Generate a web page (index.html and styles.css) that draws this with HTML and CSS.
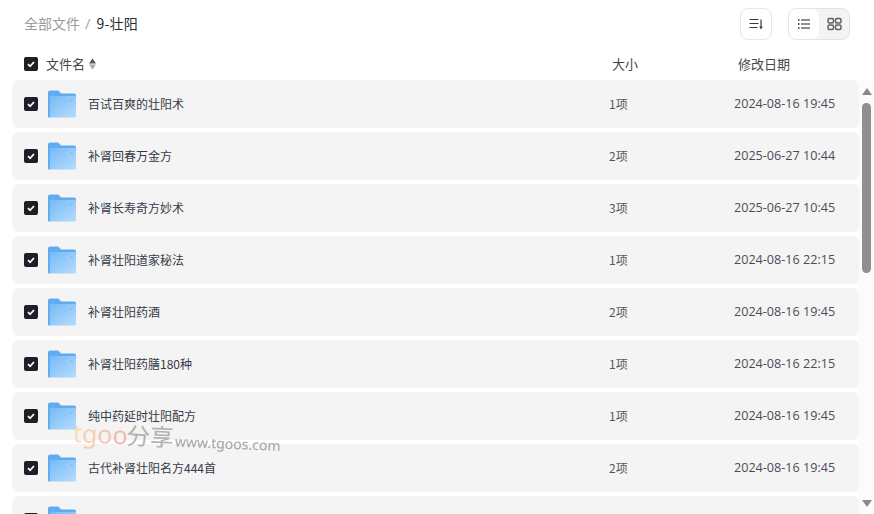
FILE: index.html
```html
<!DOCTYPE html>
<html lang="zh-CN">
<head>
    <meta charset="UTF-8">
    <title>9-壮阳</title>
    <link rel="stylesheet" href="styles.css">
</head>
<body>
    <svg class="defs" width="0" height="0">
        <defs>
            <linearGradient id="folderFront" x1="0" y1="0" x2="1" y2="1">
                <stop offset="0" stop-color="#74b9f6"/>
                <stop offset="1" stop-color="#b5dcfd"/>
            </linearGradient>
            <symbol id="folder" viewBox="0 0 30 28">
                <path d="M1 2.5C1 1.4 1.9.5 3 .5h7.6c.6 0 1.100.3 1.500.7L14 3.500h13c1.100 0 2 .9 2 2V8H1z" fill="#5fadf0"/>
                <path d="M1 6h26.500c.8 0 1.500.7 1.500 1.500V26c0 .8-.7 1.500-1.500 1.500H2.500C1.700 27.500 1 26.800 1 26z" fill="url(#folderFront)"/>
                <rect x="23" y="10" width="3" height="1.500" fill="#5fadf0" opacity=".45"/>
                <path d="M1 6v20c0 .8.700 1.500 1.500 1.500H3V6z" fill="#5fadf0"/>
            </symbol>
            <symbol id="check" viewBox="0 0 14 14">
                <rect width="14" height="14" rx="2" fill="#1d1e26"/>
                <path d="M4 7.200l2.100 2.100L10 5" fill="none" stroke="#fff" stroke-width="1.800"/>
            </symbol>
        </defs>
    </svg>

    <div class="top">
        <div class="crumbs">
            <span class="crumb-link">全部文件</span>
            <span class="crumb-sep">/</span>
            <span class="crumb-now">9-壮阳</span>
        </div>
        <div class="tools">
            <button class="sort-btn">
                <svg width="16" height="16" viewBox="0 0 16 16">
                    <path d="M1.500 3.500h9M1.500 7.500h9M1.500 11.500h8" stroke="#3a3a3a" stroke-width="1.200" fill="none"/>
                    <path d="M13 3.500v8" stroke="#3a3a3a" stroke-width="1.200"/>
                    <path d="M11.200 10.500h3.600L13 13.500z" fill="#3a3a3a"/>
                </svg>
            </button>
            <div class="view-switch">
                <span class="view-btn active">
                    <svg width="14" height="14" viewBox="0 0 14 14">
                        <path d="M4 3h9M4 7h9M4 11h9" stroke="#23232b" stroke-width="1.100"/>
                        <path d="M1 3h1.500M1 7h1.500M1 11h1.500" stroke="#23232b" stroke-width="1.300"/>
                    </svg>
                </span>
                <span class="view-btn">
                    <svg width="15" height="14" viewBox="0 0 15 14">
                        <rect x="1" y="1.500" width="5.500" height="4.500" rx="1.500" fill="none" stroke="#5f5f5f" stroke-width="1.500"/>
                        <rect x="8.500" y="1.500" width="5.500" height="4.500" rx="1.500" fill="none" stroke="#5f5f5f" stroke-width="1.500"/>
                        <rect x="1" y="8" width="5.500" height="4.500" rx="1.500" fill="none" stroke="#5f5f5f" stroke-width="1.500"/>
                        <rect x="8.500" y="8" width="5.500" height="4.500" rx="1.500" fill="none" stroke="#5f5f5f" stroke-width="1.500"/>
                    </svg>
                </span>
            </div>
        </div>
    </div>

    <div class="head">
        <svg class="check" width="14" height="14"><use href="#check"/></svg>
        <span class="head-name">文件名</span>
        <svg class="sort-mark" width="7" height="12" viewBox="0 0 7 12">
            <path d="M3.500 0.500L7 5.500H0z" fill="#555"/>
            <path d="M3.500 11.500L0 6.500h7z" fill="#aaa"/>
        </svg>
        <span class="head-size">大小</span>
        <span class="head-date">修改日期</span>
    </div>

    <div class="body-wrap">
        <div class="list">
            <div class="row">
                <svg class="check" width="14" height="14"><use href="#check"/></svg>
                <svg class="folder" width="30" height="28"><use href="#folder"/></svg>
                <span class="name">百试百爽的壮阳术</span>
                <span class="size">1项</span>
                <span class="date">2024-08-16 19:45</span>
            </div>
            <div class="row">
                <svg class="check" width="14" height="14"><use href="#check"/></svg>
                <svg class="folder" width="30" height="28"><use href="#folder"/></svg>
                <span class="name">补肾回春万金方</span>
                <span class="size">2项</span>
                <span class="date">2025-06-27 10:44</span>
            </div>
            <div class="row">
                <svg class="check" width="14" height="14"><use href="#check"/></svg>
                <svg class="folder" width="30" height="28"><use href="#folder"/></svg>
                <span class="name">补肾长寿奇方妙术</span>
                <span class="size">3项</span>
                <span class="date">2025-06-27 10:45</span>
            </div>
            <div class="row">
                <svg class="check" width="14" height="14"><use href="#check"/></svg>
                <svg class="folder" width="30" height="28"><use href="#folder"/></svg>
                <span class="name">补肾壮阳道家秘法</span>
                <span class="size">1项</span>
                <span class="date">2024-08-16 22:15</span>
            </div>
            <div class="row">
                <svg class="check" width="14" height="14"><use href="#check"/></svg>
                <svg class="folder" width="30" height="28"><use href="#folder"/></svg>
                <span class="name">补肾壮阳药酒</span>
                <span class="size">2项</span>
                <span class="date">2024-08-16 19:45</span>
            </div>
            <div class="row">
                <svg class="check" width="14" height="14"><use href="#check"/></svg>
                <svg class="folder" width="30" height="28"><use href="#folder"/></svg>
                <span class="name">补肾壮阳药膳180种</span>
                <span class="size">1项</span>
                <span class="date">2024-08-16 22:15</span>
            </div>
            <div class="row">
                <svg class="check" width="14" height="14"><use href="#check"/></svg>
                <svg class="folder" width="30" height="28"><use href="#folder"/></svg>
                <span class="name">纯中药延时壮阳配方</span>
                <span class="size">1项</span>
                <span class="date">2024-08-16 19:45</span>
            </div>
            <div class="row">
                <svg class="check" width="14" height="14"><use href="#check"/></svg>
                <svg class="folder" width="30" height="28"><use href="#folder"/></svg>
                <span class="name">古代补肾壮阳名方444首</span>
                <span class="size">2项</span>
                <span class="date">2024-08-16 19:45</span>
            </div>
            <div class="row">
                <svg class="check" width="14" height="14"><use href="#check"/></svg>
                <svg class="folder" width="30" height="28"><use href="#folder"/></svg>
            </div>
        </div>
        <div class="scrollbar">
            <span class="arrow-up"></span>
            <span class="thumb"></span>
            <span class="arrow-down"></span>
        </div>
    </div>

    <div class="watermark">
        <span class="wm-t">t</span><span class="wm-g">g</span><span class="wm-o1">o</span><span class="wm-o2">o</span><span class="wm-cn">分享</span>
        <span class="wm-url">www.tgoos.com</span>
    </div>
</body>
</html>
```

FILE: styles.css
```css
html, body {
    height: 514px;
    overflow: hidden;
}
body {
    margin: 0;
    background: #fff;
    font-family: "Open Sans", "Noto Sans CJK SC", sans-serif;
    color: #4a4a55;
    font-size: 12px;
    position: relative;
}
.defs {
    position: absolute;
}
.top {
    height: 48px;
    display: flex;
    align-items: center;
    justify-content: space-between;
    padding: 0 24px;
}
.crumbs {
    display: flex;
    align-items: center;
    gap: 5px;
    font-size: 14px;
    margin-bottom: 2px;
}
.crumb-link {
    color: #9a9a9a;
    font-family: "Noto Sans CJK SC", sans-serif;
    font-size: 14px;
}
.crumb-sep {
    color: #a8a8a8;
    font-size: 15px;
}
.crumb-now {
    margin-left: 1px;
    color: #2c2c36;
    font-family: "Noto Sans CJK SC", sans-serif;
    font-size: 14px;
    letter-spacing: .2px;
}
.tools {
    display: flex;
    align-items: center;
    gap: 16px;
}
.sort-btn {
    width: 32px;
    height: 32px;
    padding: 0;
    background: #fff;
    border: 1px solid #e8e8e8;
    border-radius: 8px;
    display: flex;
    align-items: center;
    justify-content: center;
}
.view-switch {
    width: 62px;
    height: 32px;
    display: flex;
    background: #f3f3f3;
    border-radius: 8px;
    box-sizing: border-box;
    border: 1px solid #e4e4e4;
}
.view-btn {
    width: 30px;
    display: flex;
    align-items: center;
    justify-content: center;
}
.view-btn.active {
    background: #fff;
    border-radius: 7px;
}
.head {
    height: 32px;
    display: flex;
    align-items: center;
    padding-left: 24px;
    font-family: "Noto Sans CJK SC", sans-serif;
    font-size: 13px;
    color: #45454f;
}
.head-name {
    margin-left: 8px;
    margin-bottom: 2px;
}
.sort-mark {
    margin-left: 4px;
}
.head-size {
    margin-left: 516px;
    margin-bottom: 2px;
}
.head-date {
    margin-left: 100px;
    margin-bottom: 2px;
}
.body-wrap {
    display: flex;
    height: 434px;
}
.list {
    margin-left: 12px;
    width: 847px;
    display: flex;
    flex-direction: column;
    gap: 4px;
    overflow: hidden;
}
.row {
    flex: none;
    height: 48px;
    background: #f4f4f4;
    border-radius: 6px;
    display: flex;
    align-items: center;
    padding-left: 12px;
}
.check {
    flex: none;
}
.folder {
    flex: none;
    margin-left: 9px;
}
.name {
    width: 521px;
    margin-left: 11px;
    margin-bottom: 2px;
    font-family: "Noto Sans CJK SC", sans-serif;
    font-size: 12px;
    color: #363b47;
}
.size {
    width: 125px;
    margin-bottom: 2px;
    font-family: "Noto Sans CJK SC", sans-serif;
    color: #55555d;
}
.date {
    margin-bottom: 2px;
    font-size: 12.600px;
    color: #4c4c54;
}
.scrollbar {
    flex: none;
    width: 15px;
    display: flex;
    flex-direction: column;
    align-items: center;
    background: #fbfbfb;
}
.arrow-up {
    margin-top: 8px;
    border: 5px solid transparent;
    border-top: 0;
    border-bottom: 7px solid #8a8a8a;
}
.thumb {
    width: 9px;
    height: 170px;
    margin-top: 8px;
    background: #8f8f8f;
    border-radius: 5px;
}
.arrow-down {
    margin-top: auto;
    margin-bottom: 7px;
    border: 5px solid transparent;
    border-bottom: 0;
    border-top: 7px solid #8a8a8a;
}
/* watermark sits over the rows */
.watermark {
    position: absolute;
    left: 73px;
    top: 415px;
    white-space: nowrap;
    font-family: "Noto Sans", sans-serif;
    font-size: 25px;
    line-height: 34px;
    transform: rotate(2.500deg);
    transform-origin: left center;
    opacity: .8;
}
.wm-t {
    color: #f6d9a8;
}
.wm-g {
    color: #f5c9a0;
}
.wm-o1 {
    color: #f4b9a8;
}
.wm-o2 {
    color: #f3a9a5;
    margin-right: -1px;
}
.wm-cn {
    font-family: "Noto Sans CJK SC", sans-serif;
    font-size: 23.500px;
    color: #a0a0a0;
}
.wm-url {
    font-size: 14px;
    color: #8f8f8f;
    margin-left: -5px;
}
```
